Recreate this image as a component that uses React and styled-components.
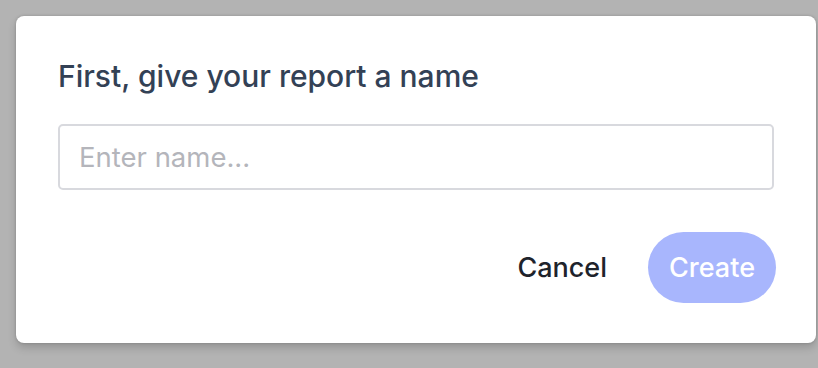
import React from 'react'
import styled, { createGlobalStyle } from 'styled-components';

const Global = createGlobalStyle`
  html, body {
    margin: 0;
    padding: 0;
    background: #b3b3b3;
    font-family: Inter, "Noto Sans", sans-serif;
  }
  * { box-sizing: border-box; }
`;

const Backdrop = styled.div`
  width: 818px;
  height: 368px;
  padding: 16px 2px 0 16px;
`;

const Dialog = styled.div`
  width: 800px;
  height: 327px;
  background: #ffffff;
  border-radius: 8px;
  box-shadow: 0 0 3px rgba(0, 0, 0, 0.18), 0 5px 8px rgba(0, 0, 0, 0.16);
  padding: 42px 40px 40px 42px;
  display: flex;
  flex-direction: column;
  & > * { flex-shrink: 0; }
`;

const Title = styled.h2`
  margin: 0;
  font-size: 30px;
  line-height: 36px;
  font-weight: 500;
  color: #334155;
`;

const Input = styled.input`
  margin-top: 30px;
  width: 716px;
  height: 66px;
  border: 2px solid #d8d9de;
  border-radius: 5px;
  padding: 0 19px;
  font-family: inherit;
  font-size: 27.5px;
  color: #1f2937;
  outline: none;
  &::placeholder {
    color: #b4b5bb;
  }
`;

const Actions = styled.div`
  margin-top: 42px;
  display: flex;
  justify-content: flex-end;
  align-items: center;
  gap: 17px;
`;

const Button = styled.button`
  border: none;
  font-family: inherit;
  font-size: 27px;
  font-weight: 500;
  height: 71px;
  padding: 0 ${p => (p.primary ? '21px' : '24px')};
  border-radius: 36px;
  cursor: pointer;
  background: ${p => (p.primary ? '#a8b6fd' : 'transparent')};
  color: ${p => (p.primary ? '#ffffff' : '#1e232b')};
`;

const App = () => {
  return (
    <Backdrop>
      <Global />
      <Dialog>
        <Title>First, give your report a name</Title>
        <Input placeholder="Enter name..." />
        <Actions>
          <Button>Cancel</Button>
          <Button primary>Create</Button>
        </Actions>
      </Dialog>
    </Backdrop>
  )
}

export default App
